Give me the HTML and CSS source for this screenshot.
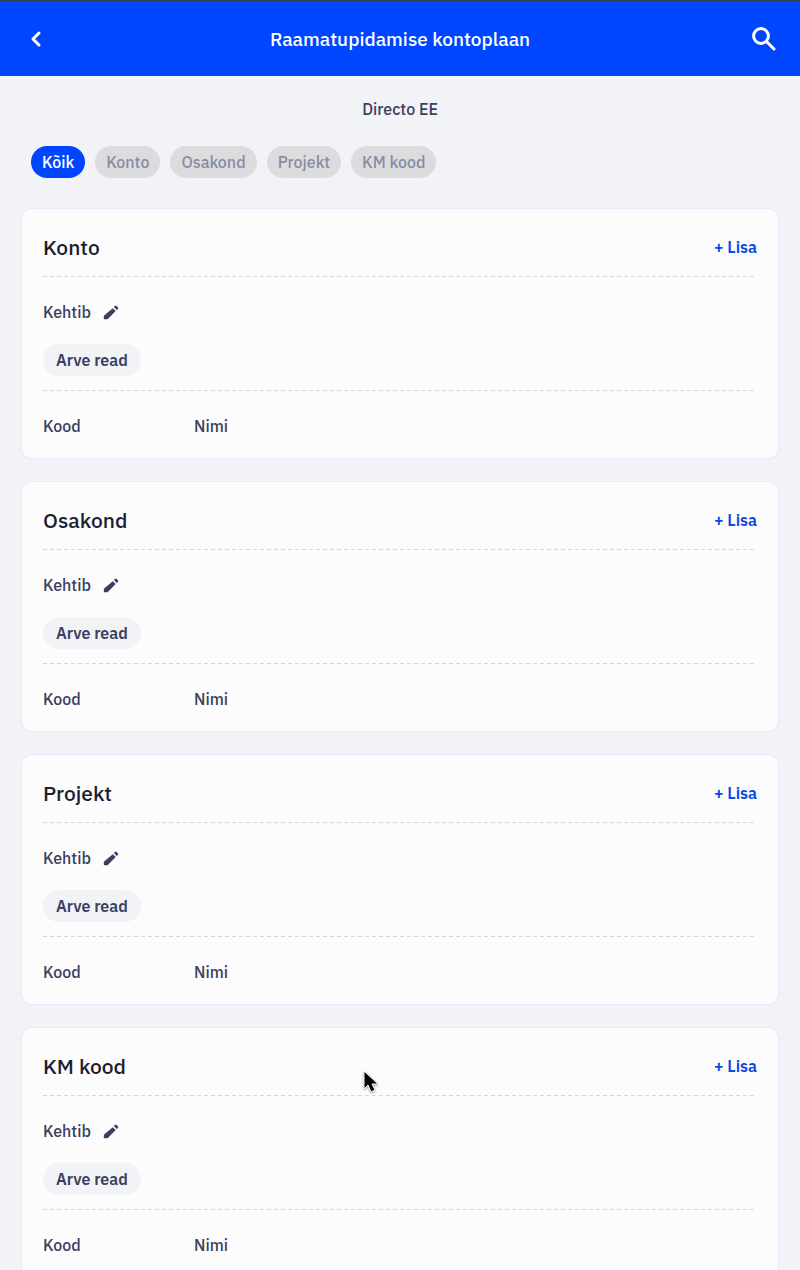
FILE: index.html
```html
<!DOCTYPE html>
<html lang="et">
<head>
    <meta charset="UTF-8">
    <meta name="viewport" content="width=device-width, initial-scale=1">
    <title>Raamatupidamise kontoplaan</title>
    <link rel="stylesheet" href="styles.css">
</head>
<body>
    <svg class="sprite" aria-hidden="true">
        <symbol id="icon-pencil" viewBox="0 0 16 16">
            <path d="M9.800 4.200l2.900 2.900-7.600 7.600c-.4.4-.9.600-1.400.600H1.500c-.4 0-.7-.3-.7-.7v-2c0-.5.2-1 .6-1.400zM10.900 3.100l1-1c.5-.5 1.300-.5 1.800 0l1.100 1.100c.5.5.5 1.300 0 1.800l-1 1z"/>
        </symbol>
    </svg>
    <header class="topbar">
        <a class="topbar-back" href="#" aria-label="Tagasi">
            <svg width="16" height="20" viewBox="0 0 16 20"><path d="M11 4L5 10l6 6"/></svg>
        </a>
        <h1>Raamatupidamise kontoplaan</h1>
        <button class="topbar-search" type="button" aria-label="Otsi">
            <svg width="24" height="24" viewBox="0 0 24 24"><circle cx="9" cy="9" r="7.400"/><path d="M14.500 14.500l7.500 7.500"/></svg>
        </button>
    </header>
    <main>
        <p class="company">Directo EE</p>
        <nav class="filters">
            <button class="filter active" type="button">Kõik</button>
            <button class="filter" type="button">Konto</button>
            <button class="filter" type="button">Osakond</button>
            <button class="filter" type="button">Projekt</button>
            <button class="filter" type="button">KM kood</button>
        </nav>
        <section class="card">
            <div class="card-header">
                <h2>Konto</h2>
                <a class="add" href="#">+ Lisa</a>
            </div>
            <div class="valid">
                <span>Kehtib</span>
                <button class="edit" type="button" aria-label="Muuda"><svg width="16" height="16"><use href="#icon-pencil"/></svg></button>
            </div>
            <span class="tag">Arve read</span>
            <table class="dimensions">
                <thead><tr><th class="code">Kood</th><th>Nimi</th></tr></thead>
            </table>
        </section>
        <section class="card">
            <div class="card-header">
                <h2>Osakond</h2>
                <a class="add" href="#">+ Lisa</a>
            </div>
            <div class="valid">
                <span>Kehtib</span>
                <button class="edit" type="button" aria-label="Muuda"><svg width="16" height="16"><use href="#icon-pencil"/></svg></button>
            </div>
            <span class="tag">Arve read</span>
            <table class="dimensions">
                <thead><tr><th class="code">Kood</th><th>Nimi</th></tr></thead>
            </table>
        </section>
        <section class="card">
            <div class="card-header">
                <h2>Projekt</h2>
                <a class="add" href="#">+ Lisa</a>
            </div>
            <div class="valid">
                <span>Kehtib</span>
                <button class="edit" type="button" aria-label="Muuda"><svg width="16" height="16"><use href="#icon-pencil"/></svg></button>
            </div>
            <span class="tag">Arve read</span>
            <table class="dimensions">
                <thead><tr><th class="code">Kood</th><th>Nimi</th></tr></thead>
            </table>
        </section>
        <section class="card">
            <div class="card-header">
                <h2>KM kood</h2>
                <a class="add" href="#">+ Lisa</a>
            </div>
            <div class="valid">
                <span>Kehtib</span>
                <button class="edit" type="button" aria-label="Muuda"><svg width="16" height="16"><use href="#icon-pencil"/></svg></button>
            </div>
            <span class="tag">Arve read</span>
            <table class="dimensions">
                <thead><tr><th class="code">Kood</th><th>Nimi</th></tr></thead>
            </table>
        </section>
    </main>
    <svg class="cursor" width="18" height="26" viewBox="0 0 18 26" aria-hidden="true">
        <path d="M2 2v18l4-4 3 7 4-2-3-6h6z"/>
    </svg>
</body>
</html>
```

FILE: styles.css
```css
* {
    box-sizing: border-box;
}
body {
    position: relative;
    margin: 0;
    height: 100vh;
    overflow: hidden;
    background-color: #f1f3f7;
    color: #3a4060;
    font-family: "IBM Plex Sans", Roboto, sans-serif;
    font-size: 16px;
    font-weight: 500;
    line-height: 24px;
}
button {
    border: none;
    padding: 0;
    background: none;
    font: inherit;
    color: inherit;
    cursor: pointer;
}
svg {
    display: block;
}
.sprite {
    position: absolute;
    width: 0;
    height: 0;
}
.topbar {
    display: flex;
    justify-content: space-between;
    align-items: center;
    height: 76px;
    padding: 0 24px;
    border-top: 1px solid #3a3d4c;
    background-color: #0046ff;
    color: #fff;
}
.topbar svg {
    fill: none;
    stroke: #fff;
    stroke-width: 3;
    stroke-linecap: round;
    stroke-linejoin: round;
}
.topbar-back,
.topbar-search {
    display: flex;
    flex: 1 0 0;
}
.topbar-back svg {
    margin-left: 4px;
}
.topbar-search {
    justify-content: flex-end;
}
h1 {
    margin: 0;
    font-size: 19px;
    font-weight: 500;
}
main {
    padding: 21px;
}
.company {
    margin: 0;
    text-align: center;
}
.filters {
    display: flex;
    gap: 10px;
    padding: 25px 10px 30px;
}
.filter {
    height: 32px;
    padding: 0 11px;
    border-radius: 16px;
    background-color: #dcdcde;
    color: #888ca3;
}
.filter.active {
    background-color: #0046ff;
    color: #fff;
}
.card {
    margin-bottom: 22px;
    padding: 11px 21px 20px;
    border: 1px solid #e5ebfa;
    border-radius: 11px;
    background-color: #fcfcfd;
}
.card-header {
    display: flex;
    justify-content: space-between;
    align-items: center;
    height: 57px;
    padding-bottom: 3px;
}
.card-header,
.dimensions {
    background-image: repeating-linear-gradient(to right, #d6d6da 0, #d6d6da 4px, transparent 4px, transparent 7px);
    background-size: 100% 1px;
    background-repeat: no-repeat;
}
.card-header {
    background-position: bottom;
}
h2 {
    margin: 0;
    color: #1c1e2f;
    font-size: 21px;
    font-weight: 500;
}
.add {
    color: #0b47e0;
    font-weight: 600;
    text-decoration: none;
}
.valid {
    display: flex;
    align-items: center;
    gap: 12px;
    margin: 23px 0 20px;
}
.edit {
    fill: #3a4060;
}
.tag {
    display: block;
    width: fit-content;
    padding: 4px 13px;
    border-radius: 16px;
    background-color: #f1f3f7;
    font-weight: 600;
}
.dimensions {
    width: 100%;
    margin-top: 14px;
    padding-top: 24px;
    border-spacing: 0;
}
th {
    padding: 0;
    text-align: left;
    font-weight: 500;
}
.code {
    width: 151px;
}
/* mouse pointer lying over the last card */
.cursor {
    position: absolute;
    left: 362px;
    top: 1069px;
    stroke: #fff;
    stroke-width: 1;
    filter: drop-shadow(0 1px 1px rgba(0, 0, 0, 0.4));
}
```
